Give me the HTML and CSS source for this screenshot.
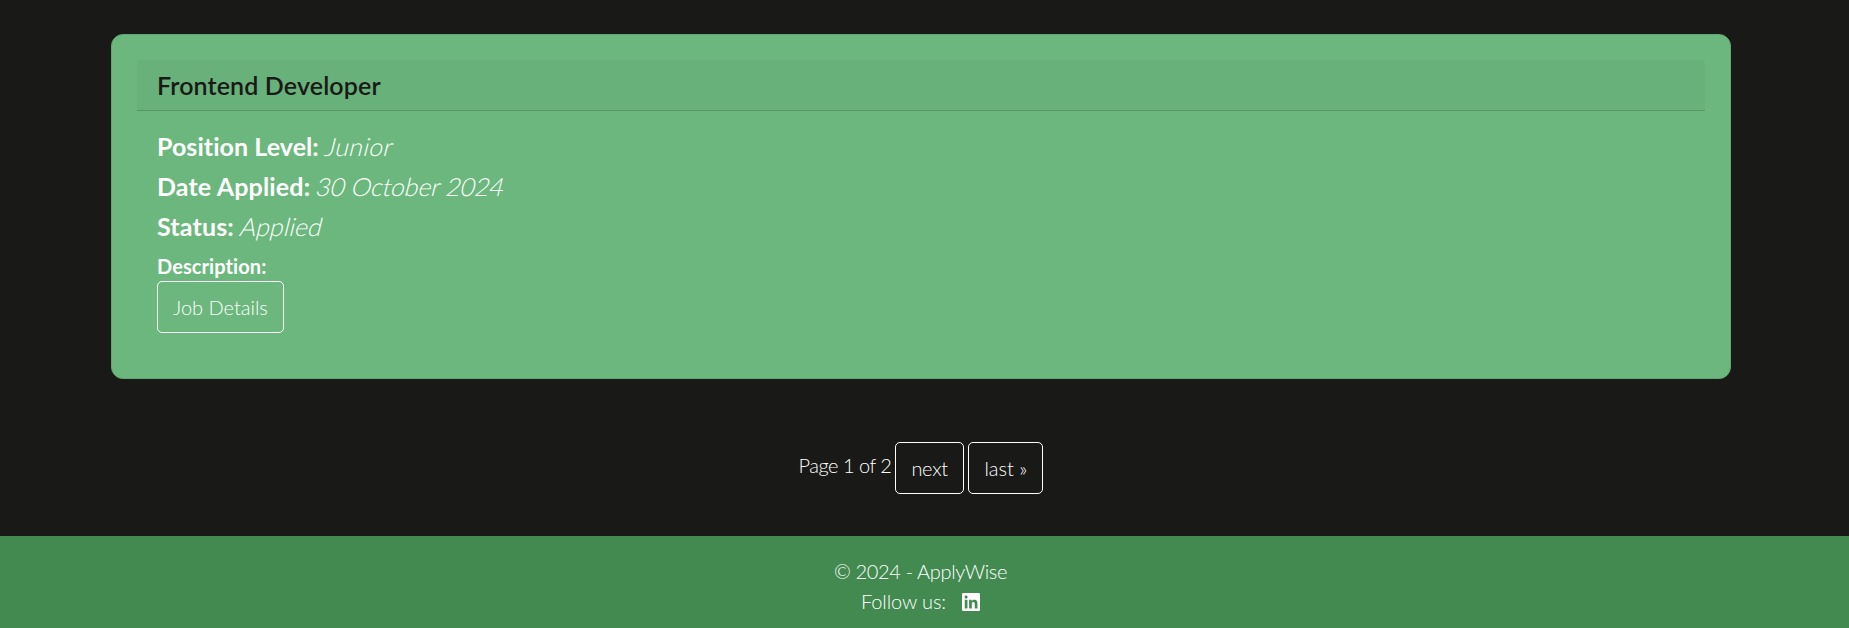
FILE: index.html
```html
<!DOCTYPE html>
<html lang="en">
<head>
<meta charset="utf-8">
<title>ApplyWise</title>
<link rel="stylesheet" href="styles.css">
</head>
<body>
<main class="container">
  <article class="card">
    <h4 class="card-header">Frontend Developer</h4>
    <div class="card-body">
      <p class="field"><strong>Position Level:</strong> <em class="level">Junior</em></p>
      <p class="field"><strong class="date-label">Date Applied:</strong> <em class="date">30 October 2024</em></p>
      <p class="field"><strong class="status-label">Status:</strong> <em>Applied</em></p>
      <p class="description">Description:</p>
      <a class="btn details">Job Details</a>
    </div>
  </article>
  <nav class="pagination">
    <span class="current">Page 1 of 2</span> <a class="btn next">next</a> <a class="btn last">last »</a>
  </nav>
</main>
<footer class="footer">
  <p class="copyright">© 2024 - ApplyWise</p>
  <p class="follow"><span>Follow us:</span>
    <svg class="linkedin" viewBox="0 0 448 448"><path fill="currentColor" d="M416 0H31.900C14.300 0 0 14.500 0 32.300v383.400C0 433.500 14.300 448 31.900 448H416c17.600 0 32-14.500 32-32.300V32.300C448 14.500 433.600 0 416 0zM135.400 384H69V170.200h66.500V384zm-33.200-243c-21.300 0-38.500-17.300-38.500-38.500S80.900 64 102.200 64c21.200 0 38.500 17.300 38.500 38.500 0 21.300-17.200 38.500-38.500 38.500zm282.100 243h-66.400V280c0-24.800-.5-56.700-34.500-56.700-34.600 0-39.900 27-39.900 54.900V384h-66.400V170.200h63.700v29.200h.9c8.900-16.800 30.600-34.500 62.900-34.500 67.200 0 79.700 44.300 79.700 101.900V384z"/></svg>
  </p>
</footer>
</body>
</html>
```
FILE: styles.css
```css
* { box-sizing: border-box; }
body {
  margin: 0;
  height: 628px;
  overflow: hidden;
  background: #191917;
  color: #fff;
  font: 300 20px/30px Lato, sans-serif;
  font-variant-ligatures: none;
}
p, h4 { margin: 0; }
.container {
  height: 536px;
  padding: 34px 118px 0 111px;
}
.card {
  height: 345px;
  padding: 25px 25px;
  border: 1px solid #62a673;
  border-radius: 12px;
  background: #6bb77d;
}
.card-header {
  height: 51px;
  padding: 10px 20px;
  border-bottom: 1px solid #589668;
  border-radius: 4px 4px 0 0;
  background: #69b17a;
  color: #191917;
  font-size: 25px;
  line-height: 30px;
  font-weight: 600;
  letter-spacing: 0.13px;
}
.card-body { padding: 20px; }
.field {
  margin-bottom: 10px;
  font-size: 25px;
  line-height: 30px;
}
.field strong { font-weight: 700; letter-spacing: 0.06px; }
.field .date-label, .field .status-label { letter-spacing: 0.15px; }
.field em {
  display: inline-block;
  font-style: normal;
  transform: skewX(-14deg);
}
.field .level { letter-spacing: 0.3px; }
.field .date { letter-spacing: -0.13px; }
.description { font-weight: 700; letter-spacing: 0.09px; }
.btn {
  display: inline-block;
  height: 52px;
  padding: 10px 15px;
  border: 1px solid #fff;
  border-radius: 5px;
  white-space: nowrap;
}
.details { width: 127px; }
.pagination {
  display: flex;
  justify-content: center;
  gap: 4px;
  margin-top: 63px;
}
.current { padding-top: 8px; letter-spacing: -0.5px; }
.next { width: 69px; letter-spacing: -0.3px; }
.last { width: 75px; }
.footer {
  height: 92px;
  padding: 20px 8px 0 0;
  background: #438a51;
  text-align: center;
}
.copyright { letter-spacing: -0.35px; }
.follow { display: flex; justify-content: center; align-items: center; gap: 16px; letter-spacing: -0.1px; }
.linkedin { width: 18px; height: 18px; margin-top: 2px; }
```
